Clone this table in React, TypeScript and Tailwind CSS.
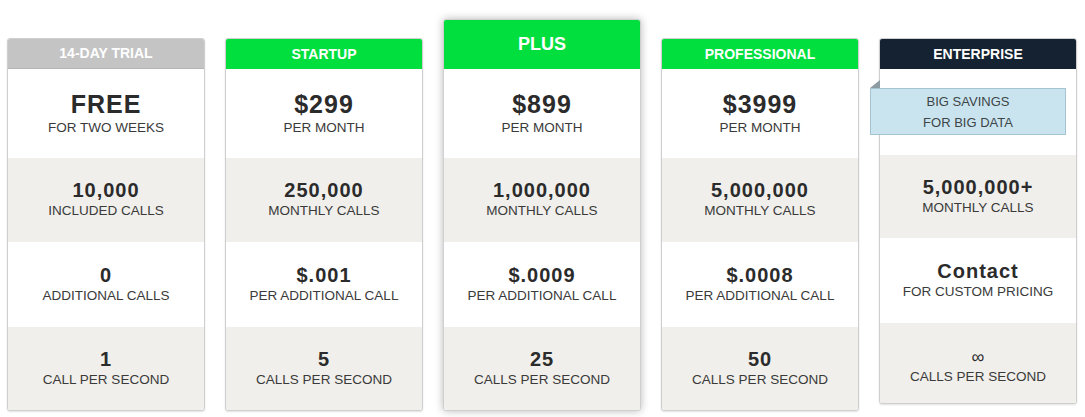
const font = { fontFamily: '"Liberation Sans", Arial, sans-serif' };

type Row = { big: string; small: string };

type Plan = {
  title: string;
  featured?: boolean;
  enterprise?: boolean;
  header: string;
  rows: Row[];
};

const plans: Plan[] = [
  {
    title: "14-DAY TRIAL",
    header: "bg-[#c4c4c4] border-b border-[#b5b5b5]",
    rows: [
      { big: "FREE", small: "FOR TWO WEEKS" },
      { big: "10,000", small: "INCLUDED CALLS" },
      { big: "0", small: "ADDITIONAL CALLS" },
      { big: "1", small: "CALL PER SECOND" },
    ],
  },
  {
    title: "STARTUP",
    header: "bg-[#00df3e]",
    rows: [
      { big: "$299", small: "PER MONTH" },
      { big: "250,000", small: "MONTHLY CALLS" },
      { big: "$.001", small: "PER ADDITIONAL CALL" },
      { big: "5", small: "CALLS PER SECOND" },
    ],
  },
  {
    title: "PLUS",
    featured: true,
    header: "bg-[#00df3e]",
    rows: [
      { big: "$899", small: "PER MONTH" },
      { big: "1,000,000", small: "MONTHLY CALLS" },
      { big: "$.0009", small: "PER ADDITIONAL CALL" },
      { big: "25", small: "CALLS PER SECOND" },
    ],
  },
  {
    title: "PROFESSIONAL",
    header: "bg-[#00df3e]",
    rows: [
      { big: "$3999", small: "PER MONTH" },
      { big: "5,000,000", small: "MONTHLY CALLS" },
      { big: "$.0008", small: "PER ADDITIONAL CALL" },
      { big: "50", small: "CALLS PER SECOND" },
    ],
  },
  {
    title: "ENTERPRISE",
    enterprise: true,
    header: "bg-[#142231]",
    rows: [
      { big: "", small: "" },
      { big: "5,000,000+", small: "MONTHLY CALLS" },
      { big: "Contact", small: "FOR CUSTOM PRICING" },
      { big: "∞", small: "CALLS PER SECOND" },
    ],
  },
];

const rowHeights = ["h-[89px]", "h-[84px]", "h-[85px]", "h-[83px] rounded-b-[3px]"];
const enterpriseHeights = ["h-[86px]", "h-[83px]", "h-[85px]", "h-[80px] rounded-b-[3px]"];

function Ribbon() {
  return (
    <div className="absolute left-[-10px] right-[10px] top-[19px]">
      {/* folded corner */}
      <svg className="absolute left-0 top-[-8px]" width="10" height="8" viewBox="0 0 10 8">
        <polygon points="0,8 10,0 10,8" fill="#8d9ba3" />
      </svg>
      <div className="h-[47px] bg-[#c9e4ef] border border-[#a3c4d0] flex flex-col items-center justify-center text-[13px] leading-[21px] text-[#3f4447]">
        <span>BIG SAVINGS</span>
        <span>FOR BIG DATA</span>
      </div>
    </div>
  );
}

function PlanCard({ plan }: { plan: Plan }) {
  const heights = plan.enterprise ? enterpriseHeights : rowHeights;
  return (
    <div
      className={`w-[198px] shrink-0 rounded-[3px] border border-[#cfcfcf] bg-white ${
        plan.featured
          ? "shadow-[0_0_9px_rgba(0,0,0,0.28)]"
          : "mt-[19px] shadow-[0_1px_2px_rgba(0,0,0,0.12)]"
      }`}
    >
      <div
        className={`${plan.header} rounded-t-[2px] flex items-center justify-center font-bold text-white ${
          plan.featured ? "h-[49px] text-[18px] text-[#eaffee]" : "h-[30px] text-[14px]"
        }`}
      >
        {plan.title}
      </div>
      {plan.rows.map((row, i) => (
        <div
          key={i}
          className={`${heights[i]} relative flex flex-col items-center justify-center ${
            i % 2 === 1 ? "bg-[#f0efeb]" : "bg-white"
          }`}
        >
          {plan.enterprise && i === 0 ? (
            <Ribbon />
          ) : (
            <>
              <span
                className={`text-[#2b2b2b] ${
                  row.big === "∞"
                    ? "mt-[8px] text-[18px] leading-[19px] font-normal"
                    : i === 0
                    ? "text-[25px] leading-[28px] font-bold tracking-[0.04em]"
                    : "text-[20px] leading-[22px] font-bold tracking-[0.05em]"
                }`}
              >
                {row.big}
              </span>
              <span className="text-[13.5px] leading-[20px] text-[#3a3a3a]">{row.small}</span>
            </>
          )}
        </div>
      ))}
    </div>
  );
}

export default function App() {
  return (
    <div className="w-[1085px] h-[417px] bg-white overflow-hidden" style={font}>
      <div className="flex items-start gap-5 px-[7px] pt-[19px]">
        {plans.map((plan) => (
          <PlanCard key={plan.title} plan={plan} />
        ))}
      </div>
    </div>
  );
}
